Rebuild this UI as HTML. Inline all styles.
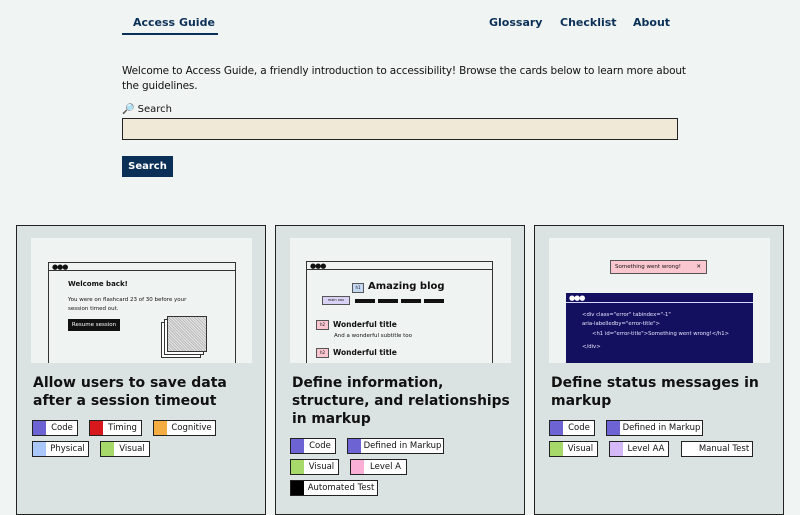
<!DOCTYPE html>
<html><head><meta charset="utf-8"><style>
*{box-sizing:border-box;margin:0;padding:0}
body{width:800px;height:500px;overflow:hidden;background:#f0f4f3;font-family:"DejaVu Sans","Liberation Sans",sans-serif;color:#111;position:relative}
.a{position:absolute}
.nav{font-size:11px;font-weight:bold;color:#0b3057;top:16px}
.card{top:225px;width:250px;height:290px;border:1px solid #222;background:#dae3e1}
.img{position:absolute;left:14px;top:12px;width:221px;height:125px;background:#eff3f2;overflow:hidden}
.title{position:absolute;left:16px;top:148px;font-size:14px;font-weight:bold;line-height:18px;width:215px}
.tag{position:absolute;height:16px;border:1px solid #222;background:#fff;font-size:8.5px;line-height:14px;padding-left:14px;text-align:center;white-space:nowrap}
.tag i{position:absolute;left:0;top:0;width:13px;height:14px}
.sk{font-family:"Comic Sans MS","DejaVu Sans",sans-serif}
.win{position:absolute;border:1.5px solid #333;border-bottom:none}
.dots{position:absolute;left:3px;top:1px;font-size:7px;letter-spacing:-1px;line-height:6px}
</style></head><body>
<div class="a nav" style="left:133px">Access Guide</div>
<div class="a" style="left:122px;top:33px;width:96px;height:2px;background:#0b3057"></div>
<div class="a nav" style="left:489px">Glossary</div>
<div class="a nav" style="left:560px">Checklist</div>
<div class="a nav" style="left:633px">About</div>
<div class="a" style="left:122px;top:64px;width:580px;font-size:10.5px;line-height:15px;letter-spacing:-0.15px">Welcome to Access Guide, a friendly introduction to accessibility! Browse the cards below to learn more about the guidelines.</div>
<div class="a" style="left:122px;top:104px;font-size:10px">🔎 Search</div>
<div class="a" style="left:122px;top:118px;width:556px;height:22px;background:#f1e9d7;border:1.5px solid #222"></div>
<div class="a" style="left:122px;top:156px;width:51px;height:21px;background:#0b3057;color:#fff;font-size:10px;font-weight:bold;text-align:center;line-height:21px">Search</div>

<div class="a card" style="left:16px">
 <div class="img">
  <div class="win" style="left:17px;top:24px;width:188px;height:110px"><div style="position:absolute;left:0;right:0;top:7px;border-top:1.5px solid #333"></div><span class="dots">●●●</span></div>
  <div class="a sk" style="left:37px;top:42px;font-size:7px;font-weight:bold">Welcome back!</div>
  <div class="a sk" style="left:37px;top:58px;font-size:5.5px;line-height:9px;width:140px">You were on flashcard 23 of 30 before your session timed out.</div>
  <div class="a sk" style="left:37px;top:81px;width:52px;height:12px;background:#111;color:#fff;font-size:5.5px;line-height:12px;text-align:center">Resume session</div>
  <div class="a" style="left:130px;top:84px;width:40px;height:36px;border:1px solid #333;background:#fff"></div>
  <div class="a" style="left:133px;top:81px;width:40px;height:36px;border:1px solid #333;background:#fff"></div>
  <div class="a" style="left:136px;top:78px;width:40px;height:36px;border:1px solid #333;background:repeating-linear-gradient(45deg,#bbb 0 1px,#e6e6e6 1px 2px)"></div>
 </div>
 <div class="title">Allow users to save data after a session timeout</div>
 <div class="tag" style="left:15px;top:194px;width:46px"><i style="background:#6e63d3"></i>Code</div>
 <div class="tag" style="left:72px;top:194px;width:53px"><i style="background:#d8181c"></i>Timing</div>
 <div class="tag" style="left:136px;top:194px;width:63px"><i style="background:#f3ad42"></i>Cognitive</div>
 <div class="tag" style="left:15px;top:215px;width:57px"><i style="background:#a9c7f8"></i>Physical</div>
 <div class="tag" style="left:83px;top:215px;width:50px"><i style="background:#a6d86a"></i>Visual</div>
</div>

<div class="a card" style="left:275px">
 <div class="img">
  <div class="win" style="left:16px;top:23px;width:187px;height:110px"><div style="position:absolute;left:0;right:0;top:7px;border-top:1.5px solid #333"></div><span class="dots">●●●</span></div>
  <div class="a" style="left:62px;top:45px;width:12px;height:10px;border:1px solid #555;background:#c5d9f4;font-size:4px;text-align:center;line-height:8px">h1</div>
  <div class="a sk" style="left:78px;top:43px;font-size:10px;font-weight:bold">Amazing blog</div>
  <div class="a" style="left:32px;top:58px;width:28px;height:9px;border:1px solid #555;background:#d9d2f4;font-size:3.5px;text-align:center;line-height:7px">main nav</div>
  <div class="a" style="left:65px;top:61px;width:20px;height:4px;background:#111"></div>
  <div class="a" style="left:88px;top:61px;width:20px;height:4px;background:#111"></div>
  <div class="a" style="left:111px;top:61px;width:20px;height:4px;background:#111"></div>
  <div class="a" style="left:134px;top:61px;width:20px;height:4px;background:#111"></div>
  <div class="a" style="left:26px;top:82px;width:13px;height:10px;border:1px solid #555;background:#fac6d0;font-size:4px;text-align:center;line-height:8px">h2</div>
  <div class="a sk" style="left:43px;top:82px;font-size:7.5px;font-weight:bold">Wonderful title</div>
  <div class="a sk" style="left:44px;top:95px;font-size:5.5px">And a wonderful subtitle too</div>
  <div class="a" style="left:26px;top:110px;width:13px;height:10px;border:1px solid #555;background:#fac6d0;font-size:4px;text-align:center;line-height:8px">h2</div>
  <div class="a sk" style="left:43px;top:110px;font-size:7.5px;font-weight:bold">Wonderful title</div>
 </div>
 <div class="title" style="width:230px;font-size:13.8px">Define information,<br>structure, and relationships<br>in markup</div>
 <div class="tag" style="left:14px;top:212px;width:46px"><i style="background:#6e63d3"></i>Code</div>
 <div class="tag" style="left:71px;top:212px;width:97px"><i style="background:#6e63d3"></i>Defined in Markup</div>
 <div class="tag" style="left:14px;top:233px;width:49px"><i style="background:#a6d86a"></i>Visual</div>
 <div class="tag" style="left:74px;top:233px;width:57px"><i style="background:#fbaed6"></i>Level A</div>
 <div class="tag" style="left:14px;top:254px;width:88px"><i style="background:#000"></i>Automated Test</div>
</div>

<div class="a card" style="left:534px">
 <div class="img">
  <div class="a sk" style="left:61px;top:22px;width:97px;height:14px;border:1px solid #555;background:#fac6d0;font-size:5.5px;line-height:12px;padding-left:4px">Something went wrong! <span style="position:absolute;right:5px">✕</span></div>
  <div class="a sk" style="left:17px;top:55px;width:187px;height:72px;background:#141060;color:#e8e8ff;font-size:5.3px">
   <div style="position:absolute;left:3px;top:1px;font-size:7px;letter-spacing:-1px;color:#fff">●●●</div>
   <div style="position:absolute;left:0;right:0;top:9px;border-top:1px solid #d8d8ff"></div>
   <div style="position:absolute;left:16px;top:18px;line-height:9px">&lt;div class="error" tabindex="-1"<br>aria-labelledby="error-title"&gt;</div>
   <div style="position:absolute;left:26px;top:38px">&lt;h1 id="error-title"&gt;Something went wrong!&lt;/h1&gt;</div>
   <div style="position:absolute;left:16px;top:51px">&lt;/div&gt;</div>
  </div>
 </div>
 <div class="title">Define status messages in<br>markup</div>
 <div class="tag" style="left:14px;top:194px;width:46px"><i style="background:#6e63d3"></i>Code</div>
 <div class="tag" style="left:71px;top:194px;width:97px"><i style="background:#6e63d3"></i>Defined in Markup</div>
 <div class="tag" style="left:14px;top:215px;width:49px"><i style="background:#a6d86a"></i>Visual</div>
 <div class="tag" style="left:74px;top:215px;width:60px"><i style="background:#d5b8f8"></i>Level AA</div>
 <div class="tag" style="left:146px;top:215px;width:72px"><i style="background:#fff"></i>Manual Test</div>
</div>
</body></html>
